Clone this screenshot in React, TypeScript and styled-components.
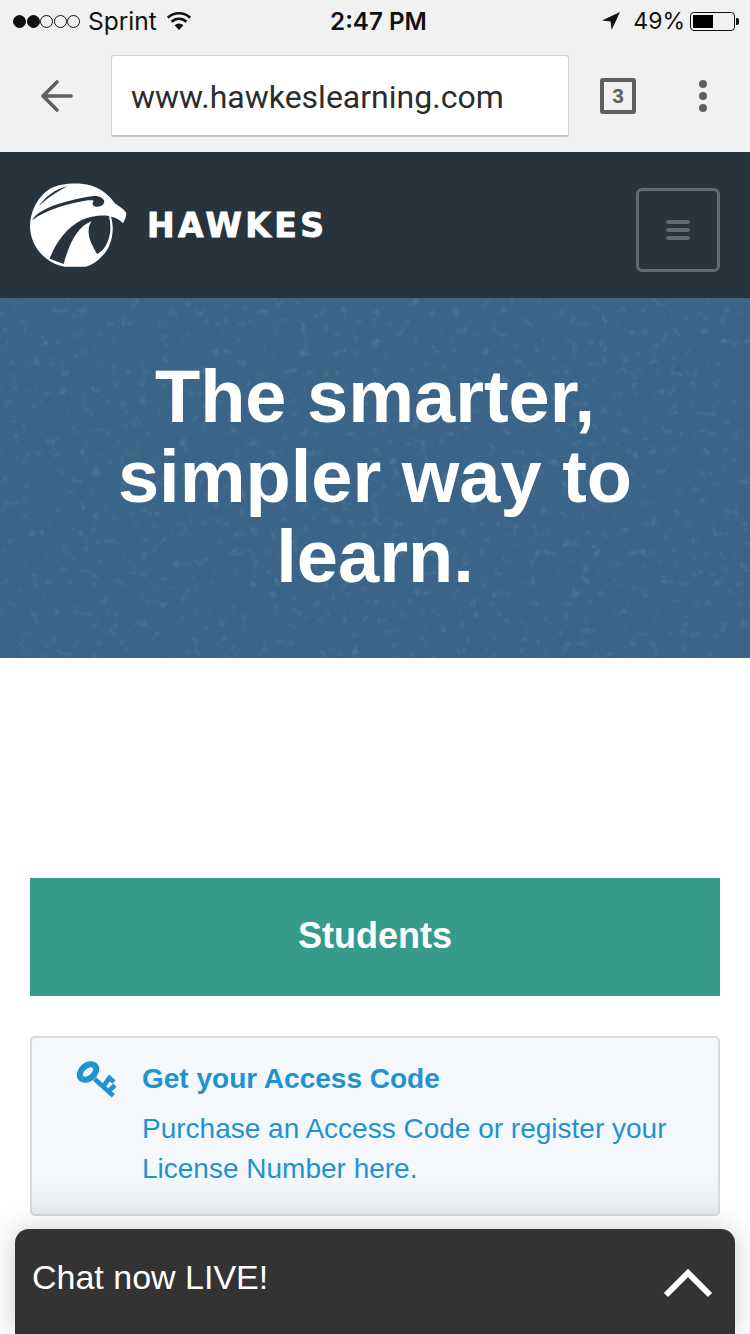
import React from "react";
import styled, { createGlobalStyle } from "styled-components";

const Global = createGlobalStyle`
  html, body { margin: 0; padding: 0; background: #fff; }
  * { box-sizing: border-box; }
`;

const Page = styled.div`
  position: relative;
  width: 750px;
  height: 1334px;
  overflow: hidden;
  background: #fff;
  font-family: "Liberation Sans", Arial, sans-serif;
`;

const Chrome = styled.header`
  background: #f1f1f1;
  height: 152px;
`;

const StatusBar = styled.div`
  height: 42px;
  margin-bottom: -2px;
  padding: 0 11px 0 13px;
  display: grid;
  grid-template-columns: 1fr auto 1fr;
  align-items: center;
  font-family: Inter, sans-serif;
  font-size: 24px;
  color: #111;
`;

const StatusLeft = styled.div`
  display: flex;
  align-items: center;
`;

const StatusRight = styled.div`
  display: flex;
  align-items: center;
  justify-content: flex-end;
`;

const SignalDot = styled.span<{ $on?: boolean }>`
  width: 13px;
  height: 13px;
  margin-right: 0.6px;
  border-radius: 50%;
  border: 1px solid #111;
  background: ${(p) => (p.$on ? "#111" : "transparent")};
`;

const Carrier = styled.span`
  margin-left: 7px;
  margin-right: 9px;
  font-size: 24.5px;
`;

const Clock = styled.span`
  margin-left: 5px;
  font-weight: 600;
  font-size: 24.2px;
`;

const Percent = styled.span`
  margin: 0 5px 0 13px;
  font-size: 23px;
`;

const Battery = styled.span`
  width: 45px;
  height: 19px;
  padding: 2px;
  border: 1px solid #111;
  border-radius: 4px;
  display: flex;
`;

const BatteryLevel = styled.span`
  width: 20px;
  background: #000;
`;

const BatteryTip = styled.span`
  width: 3px;
  height: 7px;
  margin-left: 1px;
  background: #111;
  border-radius: 0 2px 2px 0;
`;

const Toolbar = styled.div`
  height: 112px;
  display: grid;
  grid-template-columns: 111px 458px 31px 36px 1fr;
  align-items: center;
`;

const BackCell = styled.div`
  display: flex;
  justify-content: center;
  padding-left: 3px;
`;

const MoreCell = styled.div`
  display: flex;
  justify-content: center;
  padding-left: 20px;
`;

const AddressBar = styled.div`
  height: 82px;
  padding: 3px 0 0 19px;
  display: flex;
  align-items: center;
  background: #fff;
  border: 1px solid #d0d0d0;
  border-bottom: 2px solid #c4c4c4;
  border-radius: 3px;
  font-family: Roboto, sans-serif;
  font-size: 32px;
  color: #2c2c2c;
`;

const TabCount = styled.div`
  grid-column: 4;
  width: 36px;
  height: 36px;
  border: 4px solid #5f5f5f;
  border-radius: 3px;
  display: flex;
  align-items: center;
  justify-content: center;
  color: #5f5f5f;
  font-weight: 700;
  font-size: 21px;
`;

const NavBar = styled.nav`
  height: 146px;
  padding: 0 30px 0 25px;
  display: flex;
  align-items: center;
  background: #27343e;
`;

const Logo = styled.svg`
  width: 105px;
  height: 95px;
  flex: none;
  margin-top: -3px;
`;

const Brand = styled.span`
  margin-left: 17px;
  margin-top: 1px;
  flex: 1;
  font-family: "DejaVu Sans", sans-serif;
  font-weight: 700;
  font-size: 33px;
  letter-spacing: 3.4px;
  -webkit-text-stroke: 0.9px #fff;
  color: #fff;
`;

const MenuButton = styled.button`
  width: 84px;
  height: 84px;
  margin-top: 9px;
  padding: 0;
  display: flex;
  flex-direction: column;
  align-items: center;
  justify-content: center;
  gap: 4px;
  background: transparent;
  border: 3px solid #626a70;
  border-radius: 6px;
`;

const MenuLine = styled.span`
  width: 24px;
  height: 4px;
  border-radius: 2px;
  background: #626a70;
`;

const Hero = styled.section`
  position: relative;
  height: 360px;
  display: flex;
  align-items: center;
  justify-content: center;
  background: #3a6589;
`;

const Grain = styled.svg`
  position: absolute;
  inset: 0;
  width: 100%;
  height: 100%;
`;

const HeroTitle = styled.h1`
  position: relative;
  width: 560px;
  margin: -3px 0 0;
  text-align: center;
  font-size: 74px;
  line-height: 80px;
  font-weight: 700;
  color: #fff;
`;

const Content = styled.main`
  padding: 220px 30px 0;
`;

const Audience = styled.div`
  height: 118px;
  padding-bottom: 2px;
  display: flex;
  align-items: center;
  justify-content: center;
  background: #379b8c;
  color: #fff;
  font-size: 36px;
  font-weight: 700;
`;

const Card = styled.a`
  height: 180px;
  margin-top: 40px;
  padding: 21px 30px 0 45px;
  display: grid;
  grid-template-columns: 37px 1fr;
  column-gap: 28px;
  align-items: start;
  background: linear-gradient(#f4f7fb 0%, #f4f7fb 78%, #e8ecef 100%);
  border: 2px solid #d9d9d9;
  border-radius: 5px;
  color: #1f93cf;
`;

const KeyIcon = styled.svg`
  width: 50px;
  height: 45px;
  margin: -4px 0 0 -7px;
`;

const CardTitle = styled.div`
  font-size: 28px;
  font-weight: 700;
  line-height: 40px;
  margin-bottom: 10px;
`;

const CardBody = styled.div`
  font-size: 28px;
  line-height: 40px;
`;

const ChatWidget = styled.aside`
  position: absolute;
  left: 15px;
  right: 15px;
  bottom: 0;
  height: 105px;
  padding: 28px 22px 0 17px;
  display: flex;
  justify-content: space-between;
  align-items: flex-start;
  background: #333;
  border-radius: 14px 14px 0 0;
  box-shadow: 0 0 30px rgba(0, 0, 0, 0.2);
  color: #fff;
  font-size: 34px;
  line-height: 40px;
`;

const Chevron = styled.svg`
  width: 50px;
  height: 30px;
  margin-top: 12px;
`;

export default function App() {
  return (
    <Page>
      <Global />
      <Chrome>
        <StatusBar>
          <StatusLeft>
            <SignalDot $on />
            <SignalDot $on />
            <SignalDot />
            <SignalDot />
            <SignalDot />
            <Carrier>Sprint</Carrier>
            <svg width="26" height="20" viewBox="0 0 26 20">
              <path d="M13 19 L8.6 14.3 A6.4 6.4 0 0 1 17.4 14.3 Z" fill="#111" />
              <path d="M5.6 10.8 A10.6 10.6 0 0 1 20.4 10.8" fill="none" stroke="#111" strokeWidth="2.6" />
              <path d="M1.8 6.8 A16 16 0 0 1 24.2 6.8" fill="none" stroke="#111" strokeWidth="2.6" />
            </svg>
          </StatusLeft>
          <Clock>2:47 PM</Clock>
          <StatusRight>
            <svg width="18" height="18" viewBox="0 0 18 18">
              <path d="M18 0 L0 8.5 L8.6 9.4 L9.6 18 Z" fill="#111" />
            </svg>
            <Percent>49%</Percent>
            <Battery>
              <BatteryLevel />
            </Battery>
            <BatteryTip />
          </StatusRight>
        </StatusBar>
        <Toolbar>
          <BackCell>
            <svg width="34" height="34" viewBox="0 0 34 34">
              <path d="M31 17 H3 M17 3 L3 17 L17 31" fill="none" stroke="#5f5f5f" strokeWidth="3.6" strokeLinecap="round" strokeLinejoin="round" />
            </svg>
          </BackCell>
          <AddressBar>www.hawkeslearning.com</AddressBar>
          <TabCount>3</TabCount>
          <MoreCell>
            <svg width="10" height="34" viewBox="0 0 10 34">
              <circle cx="5" cy="5" r="4" fill="#5f5f5f" />
              <circle cx="5" cy="17" r="4" fill="#5f5f5f" />
              <circle cx="5" cy="29" r="4" fill="#5f5f5f" />
            </svg>
          </MoreCell>
        </Toolbar>
      </Chrome>

      <NavBar>
        <Logo viewBox="0 0 315 285">
          <path
            d="M75 38 C105 22 160 18 195 28 C225 36 250 55 268 80 C282 92 300 100 304 112 C304 124 298 134 294 142 C285 132 272 124 258 122 C266 150 266 180 250 215 C228 255 190 272 180 272 L120 272 C60 262 15 210 15 150 C15 105 40 60 75 38 Z"
            fill="#fff"
          />
          <path
            d="M252 120 C259 150 258 180 243 208 C235 222 225 231 216 234 C205 215 193 195 191 172 C190 155 193 145 200 136 C160 150 135 195 116 264 L74 248 C92 200 125 155 170 132 C195 122 225 116 252 120 Z"
            fill="#27343e"
          />
          <path
            d="M22 132 C24 124 40 108 70 95 C110 78 165 66 205 60 C222 58 236 66 238 76 C238 88 224 94 212 92 C202 90 200 82 206 76 C206 72 196 72 180 74 C130 82 65 100 22 132 Z"
            fill="#27343e"
          />
          <path d="M42 90 C60 62 90 40 128 30 C100 46 70 62 42 90 Z" fill="#27343e" />
        </Logo>
        <Brand>HAWKES</Brand>
        <MenuButton aria-label="Menu">
          <MenuLine />
          <MenuLine />
          <MenuLine />
        </MenuButton>
      </NavBar>

      <Hero>
        <Grain aria-hidden="true">
          <filter id="grain" x="0" y="0" width="100%" height="100%">
            <feTurbulence type="fractalNoise" baseFrequency="0.1" numOctaves="3" seed="7" />
            <feColorMatrix values="0 0 0 0 0.62  0 0 0 0 0.75  0 0 0 0 0.85  0 0 0 2 -1.22" />
          </filter>
          <rect width="100%" height="100%" filter="url(#grain)" opacity="0.2" />
        </Grain>
        <HeroTitle>The smarter, simpler way to learn.</HeroTitle>
      </Hero>

      <Content>
        <Audience>Students</Audience>
        <Card>
          <KeyIcon viewBox="0 0 150 135">
            <ellipse cx="54" cy="51" rx="28" ry="19" transform="rotate(-40 54 51)" fill="none" stroke="#1f93cf" strokeWidth="18" />
            <path d="M74 72 L130 122 M100 94 L118 69 L132 81 M116 108 L135 91" fill="none" stroke="#1f93cf" strokeWidth="14" />
          </KeyIcon>
          <div>
            <CardTitle>Get your Access Code</CardTitle>
            <CardBody>
              Purchase an Access Code or register your License Number here.
            </CardBody>
          </div>
        </Card>
      </Content>

      <ChatWidget>
        <span>Chat now LIVE!</span>
        <Chevron viewBox="0 0 50 30">
          <path d="M3 26 L25 4 L47 26" fill="none" stroke="#fff" strokeWidth="6" />
        </Chevron>
      </ChatWidget>
    </Page>
  );
}
